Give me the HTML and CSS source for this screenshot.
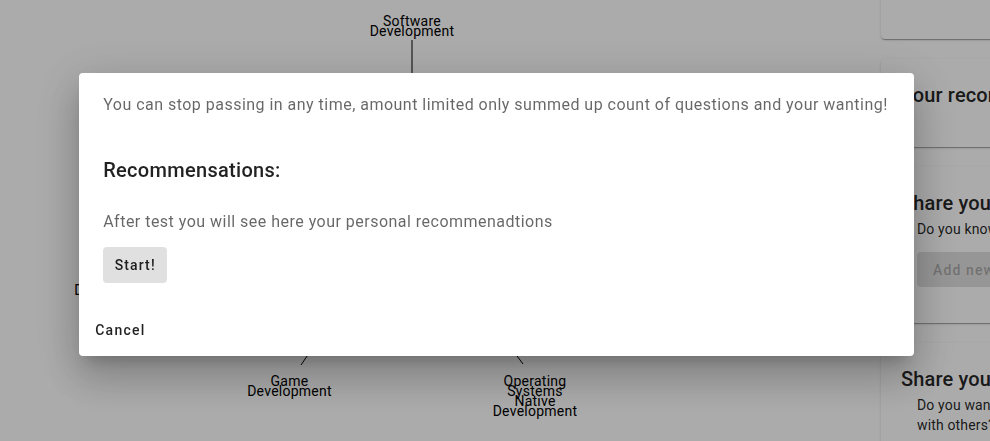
FILE: index.html
```html
<!DOCTYPE html>
<html lang="en">
<head>
<meta charset="utf-8">
<title>Test</title>
<link rel="stylesheet" href="styles.css">
</head>
<body>
<div class="page">
  <main class="diagram">
    <svg class="tree" width="881" height="441" viewBox="0 0 881 441">
      <g class="edges">
        <line x1="412" y1="40" x2="412" y2="120"/>
        <line x1="320" y1="337" x2="301" y2="365"/>
        <line x1="503" y1="337" x2="523" y2="364"/>
      </g>
      <g class="labels">
        <text x="412" y="25.5">Software</text>
        <text x="412" y="35.5">Development</text>
        <text x="289.5" y="385.5">Game</text>
        <text x="289.5" y="395.5">Development</text>
        <text x="535" y="385.5">Operating</text>
        <text x="535" y="395.5">Systems</text>
        <text x="535" y="405.5">Native</text>
        <text x="535" y="415.5">Development</text>
        <text x="116.5" y="284.5">Desktop</text>
        <text x="116.5" y="294.5">Development</text>
      </g>
    </svg>
  </main>
  <aside class="sidebar">
    <section class="card card-top"></section>
    <section class="card">
      <h2 class="card-title">Your recommendations</h2>
    </section>
    <section class="card">
      <h2 class="card-title">Share your knowledge</h2>
      <p class="card-text">Do you know something useful?</p>
      <button class="btn-disabled" disabled>Add new question</button>
    </section>
    <section class="card">
      <h2 class="card-title">Share your test</h2>
      <p class="card-text">Do you want to share your results<br>with others?</p>
    </section>
  </aside>
</div>

<div class="backdrop">
  <div class="dialog" role="dialog">
    <div class="dialog-content">
      <p class="body-text">You can stop passing in any time, amount limited only summed up count of questions and your wanting!</p>
      <h3 class="dialog-heading">Recommensations:</h3>
      <p class="body-text">After test you will see here your personal recommenadtions</p>
      <button class="btn-contained">Start!</button>
    </div>
    <div class="dialog-actions">
      <button class="btn-text">Cancel</button>
    </div>
  </div>
</div>
</body>
</html>
```

FILE: styles.css
```css
* { box-sizing: border-box; }

html, body {
  margin: 0;
  padding: 0;
  width: 990px;
  height: 441px;
  overflow: hidden;
  background: #fff;
  font-family: Roboto, "Liberation Sans", Arial, sans-serif;
}

.page {
  display: flex;
  height: 441px;
}

.diagram {
  width: 881px;
  flex: 0 0 881px;
}

.tree { display: block; }

.edges line {
  stroke: #000;
  stroke-width: 1;
}

.labels text {
  font-family: Roboto, "Liberation Sans", sans-serif;
  font-size: 14px;
  letter-spacing: 0.25px;
  fill: #000;
  text-anchor: middle;
}

.sidebar {
  flex: 0 0 320px;
  display: flex;
  flex-direction: column;
  gap: 20px;
  margin-top: -41px;
}

.card {
  flex-shrink: 0;
  background: #fff;
  border-radius: 4px;
  box-shadow: 0px 2px 1px -1px rgba(0,0,0,0.2), 0px 1px 1px 0px rgba(0,0,0,0.14), 0px 1px 3px 0px rgba(0,0,0,0.12);
  padding: 20px 20px 36px 20px;
  color: rgba(0,0,0,0.87);
}

.card-top {
  height: 80px;
}

.card-title {
  margin: 0;
  font-size: 20px;
  font-weight: 500;
  line-height: 32px;
  letter-spacing: 0.0075em;
  white-space: nowrap;
}

.card-text {
  margin: 0 0 0 16px;
  font-size: 14px;
  line-height: 20px;
  letter-spacing: 0.01071em;
  white-space: nowrap;
}

.btn-disabled {
  display: block;
  margin: 13px 0 0 16px;
  height: 35px;
  padding: 0 16px;
  border: 0;
  border-radius: 4px;
  background: rgba(0,0,0,0.12);
  color: rgba(0,0,0,0.26);
  font-family: inherit;
  font-size: 14px;
  font-weight: 500;
  letter-spacing: 0.08em;
  white-space: nowrap;
}

.backdrop {
  position: fixed;
  inset: 0;
  background: rgba(0,0,0,0.33);
  display: flex;
  align-items: center;
  justify-content: center;
  padding-bottom: 13px;
  padding-left: 3px;
}

.dialog {
  background: #fff;
  border-radius: 4px;
  box-shadow: 0px 11px 15px -7px rgba(0,0,0,0.2), 0px 24px 38px 3px rgba(0,0,0,0.14), 0px 9px 46px 8px rgba(0,0,0,0.12);
  display: flex;
  flex-direction: column;
}

.dialog-content {
  padding: 20px 26px 21px 24px;
  display: flex;
  flex-direction: column;
  align-items: flex-start;
}

.body-text {
  margin: 0;
  font-size: 16px;
  line-height: 24px;
  letter-spacing: 0.48px;
  color: rgba(0,0,0,0.6);
  white-space: nowrap;
}

.dialog-heading {
  margin: 37px 0 24px 0;
  font-size: 20px;
  font-weight: 500;
  line-height: 32px;
  letter-spacing: 0.3px;
  color: rgba(0,0,0,0.87);
}

.btn-contained {
  margin-top: 13px;
  min-width: 64px;
  height: 36px;
  padding: 0 8px;
  border: 0;
  border-radius: 4px;
  background: #e0e0e0;
  color: rgba(0,0,0,0.87);
  font-family: inherit;
  font-size: 14px;
  font-weight: 500;
  letter-spacing: 0.08em;
}

.dialog-actions {
  padding: 8px;
  display: flex;
  justify-content: flex-start;
}

.btn-text {
  height: 36px;
  padding: 0 8px;
  border: 0;
  background: transparent;
  color: rgba(0,0,0,0.87);
  font-family: inherit;
  font-size: 14px;
  font-weight: 500;
  letter-spacing: 0.09em;
}
```
